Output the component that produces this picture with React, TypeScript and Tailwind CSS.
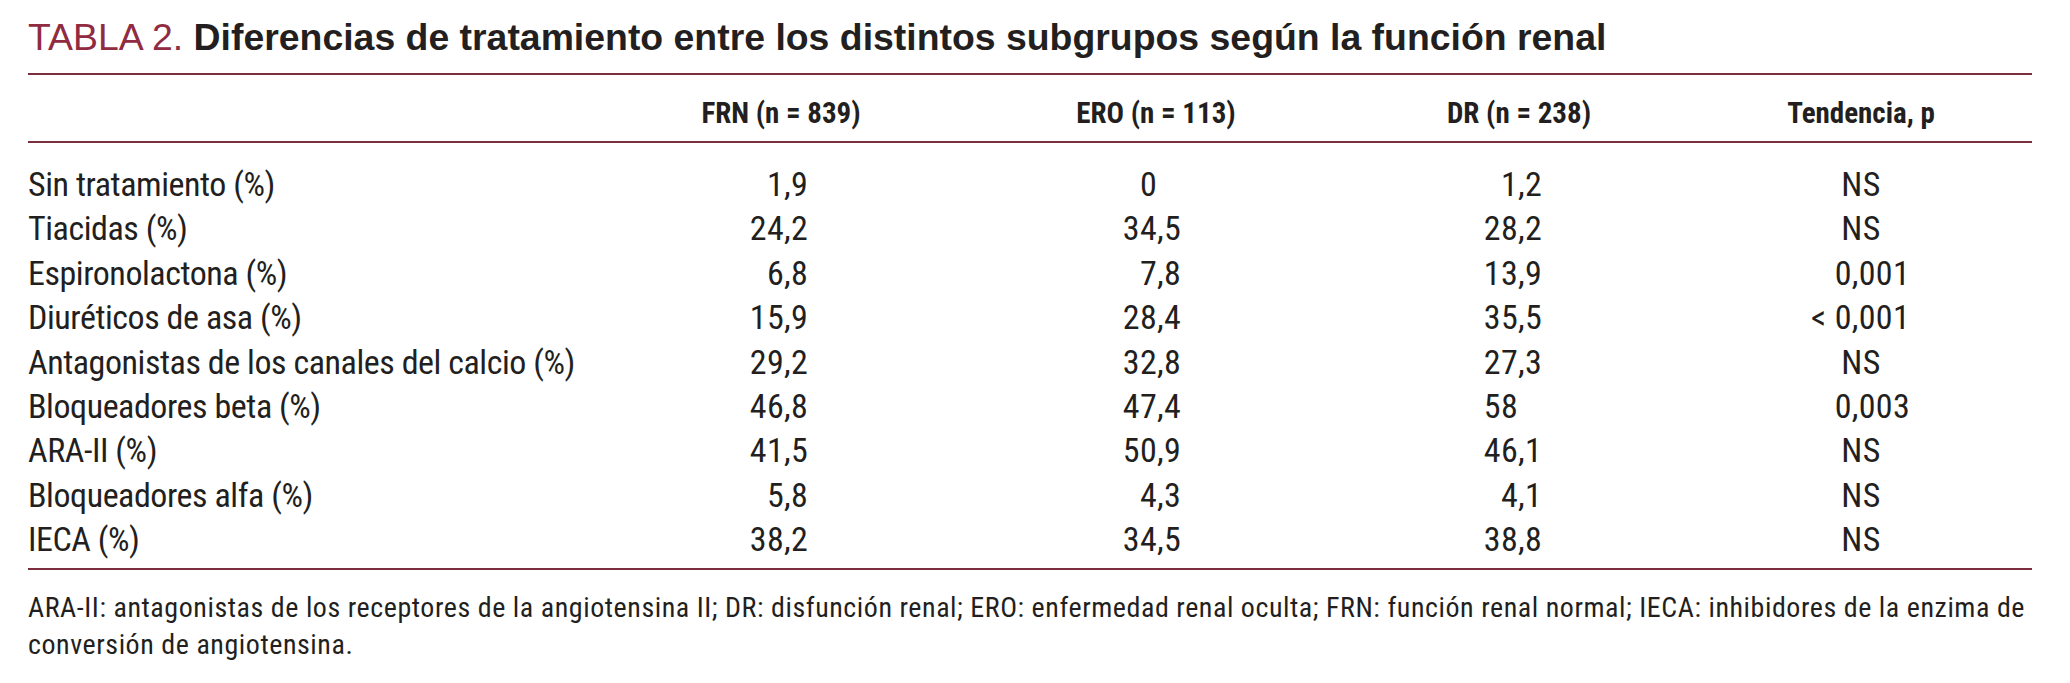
import React from 'react';

type Row = [string, string, string, string, string];

const rows: Row[] = [
  ['Sin tratamiento (%)', '1,9', '0', '1,2', 'NS'],
  ['Tiacidas (%)', '24,2', '34,5', '28,2', 'NS'],
  ['Espironolactona (%)', '6,8', '7,8', '13,9', '0,001'],
  ['Diuréticos de asa (%)', '15,9', '28,4', '35,5', '< 0,001'],
  ['Antagonistas de los canales del calcio (%)', '29,2', '32,8', '27,3', 'NS'],
  ['Bloqueadores beta (%)', '46,8', '47,4', '58', '0,003'],
  ['ARA-II (%)', '41,5', '50,9', '46,1', 'NS'],
  ['Bloqueadores alfa (%)', '5,8', '4,3', '4,1', 'NS'],
  ['IECA (%)', '38,2', '34,5', '38,8', 'NS'],
];

// values line up on the decimal comma
function Decimal({ value }: { value: string }) {
  const [int, dec] = value.split(',');
  return (
    <span className="flex justify-end">
      <span>{int}</span>
      <span className="w-[25px] text-left">{dec ? `,${dec}` : ''}</span>
    </span>
  );
}

function PValue({ value }: { value: string }) {
  if (value === 'NS') {
    return <div className="pl-[22px] text-center">{value}</div>;
  }
  return (
    <div className="flex justify-center pl-[48px]">
      <div className="flex w-[72px] justify-end whitespace-nowrap">{value}</div>
    </div>
  );
}

const cols = 'grid grid-cols-[592px_322px_428px_298px_1fr]';

export default function App() {
  return (
    <div className="h-[683px] w-[2070px] bg-white pl-[28px] pr-[38px] pt-[16px] text-[#231f20]">
      <h1 className="font-['Liberation_Sans',Arial,sans-serif] text-[37.4px] leading-[42px] whitespace-nowrap">
        <span className="text-[#902b42]">TABLA 2.</span>{' '}
        <span className="font-bold">
          Diferencias de tratamiento entre los distintos subgrupos según la función renal
        </span>
      </h1>

      <div className="mt-[15px] border-y-2 border-[#7c2d3e] font-['Roboto',sans-serif] font-stretch-condensed">
        <div
          className={`${cols} h-[68px] border-b-2 border-[#7c2d3e] pt-[8px] text-[29px] leading-[60px] font-bold`}
        >
          <div />
          <div className="text-center">FRN (n = 839)</div>
          <div className="text-center">ERO (n = 113)</div>
          <div className="text-center">DR (n = 238)</div>
          <div className="pl-[22px] text-center">Tendencia, p</div>
        </div>

        <div className="pt-[19px] pb-[6px] text-[34px] leading-[44.4px] tracking-[0.3px]">
          {rows.map((r) => (
            <div key={r[0]} className={cols}>
              <div className="whitespace-nowrap tracking-[-0.45px]">{r[0]}</div>
              <div className="pr-[133px]">
                <Decimal value={r[1]} />
              </div>
              <div className="pr-[188px]">
                <Decimal value={r[2]} />
              </div>
              <div className="pr-[125px]">
                <Decimal value={r[3]} />
              </div>
              <PValue value={r[4]} />
            </div>
          ))}
        </div>
      </div>

      <p className="mt-[19px] font-['Roboto',sans-serif] font-stretch-condensed text-[28px] leading-[37px] tracking-[0.55px] whitespace-nowrap">
        ARA-II: antagonistas de los receptores de la angiotensina II; DR: disfunción renal; ERO:
        enfermedad renal oculta; FRN: función renal normal; IECA: inhibidores de la enzima de
        <br />
        conversión de angiotensina.
      </p>
    </div>
  );
}
